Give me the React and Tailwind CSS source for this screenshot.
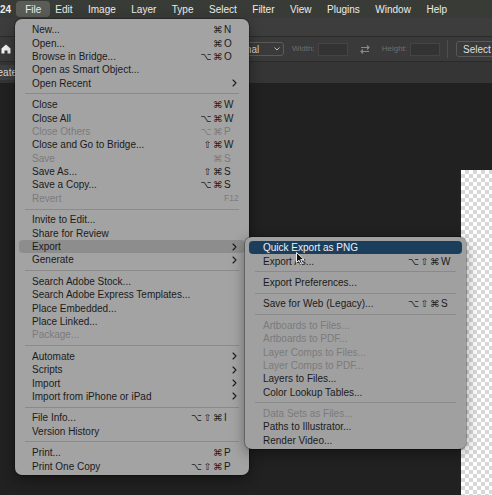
import React from "react";

const fileMenu = [
  [
    { t: "New...", m: "⌘", k: "N" },
    { t: "Open...", m: "⌘", k: "O" },
    { t: "Browse in Bridge...", m: "⌥⌘", k: "O" },
    { t: "Open as Smart Object..." },
    { t: "Open Recent", sub: true },
  ],
  [
    { t: "Close", m: "⌘", k: "W" },
    { t: "Close All", m: "⌥⌘", k: "W" },
    { t: "Close Others", m: "⌥⌘", k: "P", off: true },
    { t: "Close and Go to Bridge...", m: "⇧⌘", k: "W" },
    { t: "Save", m: "⌘", k: "S", off: true },
    { t: "Save As...", m: "⇧⌘", k: "S" },
    { t: "Save a Copy...", m: "⌥⌘", k: "S" },
    { t: "Revert", k: "F12", off: true },
  ],
  [
    { t: "Invite to Edit..." },
    { t: "Share for Review" },
    { t: "Export", sub: true, hl: "gray" },
    { t: "Generate", sub: true },
  ],
  [
    { t: "Search Adobe Stock..." },
    { t: "Search Adobe Express Templates..." },
    { t: "Place Embedded..." },
    { t: "Place Linked..." },
    { t: "Package...", off: true },
  ],
  [
    { t: "Automate", sub: true },
    { t: "Scripts", sub: true },
    { t: "Import", sub: true },
    { t: "Import from iPhone or iPad", sub: true },
  ],
  [{ t: "File Info...", m: "⌥⇧⌘", k: "I" }, { t: "Version History" }],
  [
    { t: "Print...", m: "⌘", k: "P" },
    { t: "Print One Copy", m: "⌥⇧⌘", k: "P" },
  ],
];

const exportMenu = [
  [
    { t: "Quick Export as PNG", hl: "blue" },
    { t: "Export As...", m: "⌥⇧⌘", k: "W" },
  ],
  [{ t: "Export Preferences..." }],
  [{ t: "Save for Web (Legacy)...", m: "⌥⇧⌘", k: "S" }],
  [
    { t: "Artboards to Files...", off: true },
    { t: "Artboards to PDF...", off: true },
    { t: "Layer Comps to Files...", off: true },
    { t: "Layer Comps to PDF...", off: true },
    { t: "Layers to Files..." },
    { t: "Color Lookup Tables..." },
  ],
  [
    { t: "Data Sets as Files...", off: true },
    { t: "Paths to Illustrator..." },
    { t: "Render Video..." },
  ],
];

const menuBar = ["Edit", "Image", "Layer", "Type", "Select", "Filter", "View", "Plugins", "Window", "Help"];

function Chevron() {
  return (
    <svg width="5" height="8" viewBox="0 0 5 8" className="shrink-0">
      <path d="M1 1l3 3-3 3" fill="none" stroke="currentColor" strokeWidth="1.1" strokeLinecap="round" strokeLinejoin="round" />
    </svg>
  );
}

function Row({ item, pl }) {
  let tone = item.off ? "text-[#7b7b7b]" : "text-[#1b1b1b]";
  let bg = "";
  if (item.hl === "gray") bg = "bg-[#8d8d8d]";
  if (item.hl === "blue") {
    bg = "bg-[#1c3e5d]";
    tone = "text-[#f1f1f1]";
  }
  return (
    <div className={`flex h-[13.4px] items-center rounded-[4px] pr-[8px] leading-[11px] ${pl} ${bg} ${tone}`}>
      <span className="flex-1 whitespace-nowrap">{item.t}</span>
      {item.k && (
        <span className="flex items-center">
          {item.m && (
            <span className="font-['DejaVu_Sans',sans-serif] text-[9.5px] leading-[11px] tracking-[1.5px]">{item.m}</span>
          )}
          <span className={`w-[13px] whitespace-nowrap leading-[11px] ${item.k === "F12" ? "text-[8.5px]" : ""}`}>{item.k}</span>
        </span>
      )}
      {item.sub && <Chevron />}
    </div>
  );
}

function Menu({ groups, className, pl }) {
  return (
    <div
      className={`absolute rounded-[7px] px-[4px] pt-[4px] pb-[2px] text-[10px] shadow-[0_4px_14px_rgba(0,0,0,0.4)] ring-1 ring-black/25 ${className}`}
    >
      {groups.map((g, gi) => (
        <div key={gi}>
          {gi > 0 && <div className="mx-[6px] my-[3.5px] h-px bg-[#8a8a8a]" />}
          {g.map((item) => (
            <Row key={item.t} item={item} pl={pl} />
          ))}
        </div>
      ))}
    </div>
  );
}

export default function App() {
  return (
    <div className="relative flex h-[495px] w-[492px] flex-col overflow-hidden bg-[#212121] font-['Liberation_Sans',sans-serif]">
      {/* mac menu bar */}
      <div className="flex h-[18px] shrink-0 items-center bg-[#393c36] text-[10px] text-[#ececec]">
        <span className="font-bold">24</span>
        <span className="ml-[5px] flex h-[16px] items-center rounded-[4px] bg-[#5a5d57] pl-[9px] pr-[9px]">File</span>
        {menuBar.map((m, i) => (
          <span key={m} className={i === 0 ? "ml-[5px]" : "ml-[15.5px]"}>
            {m}
          </span>
        ))}
      </div>

      {/* app bar */}
      <div className="h-[19px] shrink-0 border-b border-[#2b2b2b] bg-[#3d3d3d]" />

      {/* options bar */}
      <div className="flex h-[25px] shrink-0 items-center border-b border-[#2b2b2b] bg-[#3a3a3a] text-[10px]">
        <svg width="10" height="10" viewBox="0 0 10 10" className="ml-[1px] shrink-0">
          <path d="M5 0.5L0.5 4.5V9.5H3.5V6.5H6.5V9.5H9.5V4.5Z" fill="#f2f2f2" />
        </svg>
        <div className="ml-[213px] flex h-[14px] w-[60px] shrink-0 items-center justify-between rounded-[3px] border border-[#5a5a5a] pl-[2px] pr-[3px] text-[#d0d0d0]">
          <span>Normal</span>
          <svg width="6" height="4" viewBox="0 0 6 4">
            <path d="M0.5 0.5L3 3L5.5 0.5" fill="none" stroke="#bdbdbd" strokeWidth="1" />
          </svg>
        </div>
        <span className="ml-[8px] text-[8px] text-[#6e6e6e]">Width:</span>
        <div className="ml-[3px] h-[13px] w-[30px] shrink-0 border border-[#444] bg-[#333]" />
        <svg width="10" height="9" viewBox="0 0 10 9" className="ml-[12px] shrink-0">
          <path d="M1 2.5H9M7 0.5L9 2.5L7 4.5M9 6.5H1M3 4.5L1 6.5L3 8.5" fill="none" stroke="#8a8a8a" strokeWidth="1.1" />
        </svg>
        <span className="ml-[12px] text-[8px] text-[#6e6e6e]">Height:</span>
        <div className="ml-[3px] h-[13px] w-[30px] shrink-0 border border-[#444] bg-[#333]" />
        <div className="ml-[7px] h-[18px] w-px shrink-0 bg-[#4e4e4e]" />
        <div className="ml-[8px] flex h-[16px] shrink-0 items-center rounded-[3px] border border-[#585858] pl-[6px] pr-[8px] whitespace-nowrap text-[#dedede]">
          Select and Mask...
        </div>
      </div>

      {/* tab row */}
      <div className="flex h-[21px] shrink-0 items-center bg-[#353535] text-[10px]">
        <div className="flex h-[15px] items-center overflow-hidden bg-[#404040] pr-[4px] text-[#dcdcdc]">
          <span className="-ml-[13px]">Create</span>
        </div>
      </div>

      {/* canvas */}
      <div className="flex flex-1">
        <div className="flex-1 bg-[#212121]" />
        <div className="flex w-[31px] flex-col">
          <div className="h-[87px] bg-[#212121]" />
          <div className="flex-1 bg-[repeating-conic-gradient(#d8d8d8_0%_25%,#ffffff_0%_50%)] bg-[length:8px_8px]" />
        </div>
      </div>

      <Menu groups={fileMenu} className="left-[15px] top-[19px] w-[234px] bg-[#a3a3a3]" pl="pl-[13px]" />
      <Menu groups={exportMenu} className="left-[245px] top-[237px] w-[221px] bg-[#a0a0a0]" pl="pl-[14px]" />

      {/* pointer */}
      <svg width="9" height="13" viewBox="0 0 9 13" className="absolute left-[296px] top-[252px]">
        <path d="M0.5 0.5V10.5L3 8.2L4.8 12.2L6.4 11.5L4.7 7.6H8Z" fill="#111" stroke="#fff" strokeWidth="0.9" strokeLinejoin="round" />
      </svg>
    </div>
  );
}
